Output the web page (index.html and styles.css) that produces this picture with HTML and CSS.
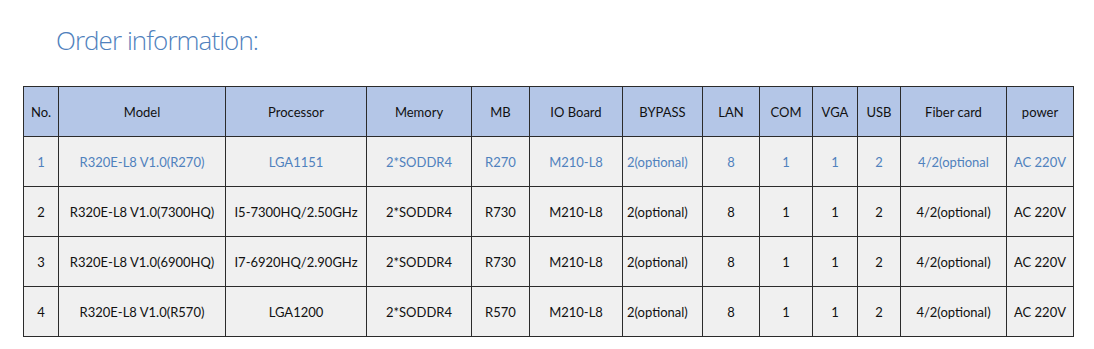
FILE: index.html
```html
<!DOCTYPE html>
<html>
<head>
<meta charset="utf-8">
<link rel="stylesheet" href="styles.css">
</head>
<body>
<div class="page">
  <h1 class="title">Order information:</h1>
  <table class="order">
    <colgroup>
      <col class="c-no"><col class="c-model"><col class="c-proc"><col class="c-mem"><col class="c-mb"><col class="c-io"><col class="c-bypass"><col class="c-lan"><col class="c-com"><col class="c-vga"><col class="c-usb"><col class="c-fiber"><col class="c-power">
    </colgroup>
    <thead>
      <tr>
        <th>No.</th><th>Model</th><th>Processor</th><th>Memory</th><th>MB</th><th>IO Board</th><th>BYPASS</th><th>LAN</th><th>COM</th><th>VGA</th><th>USB</th><th>Fiber card</th><th>power</th>
      </tr>
    </thead>
    <tbody>
      <tr class="hl">
        <td>1</td><td>R320E-L8 V1.0(R270)</td><td>LGA1151</td><td>2*SODDR4</td><td>R270</td><td>M210-L8</td><td class="left">2(optional)</td><td>8</td><td>1</td><td>1</td><td>2</td><td>4/2(optional</td><td>AC 220V</td>
      </tr>
      <tr>
        <td>2</td><td>R320E-L8 V1.0(7300HQ)</td><td>I5-7300HQ/2.50GHz</td><td>2*SODDR4</td><td>R730</td><td>M210-L8</td><td class="left">2(optional)</td><td>8</td><td>1</td><td>1</td><td>2</td><td>4/2(optional)</td><td>AC 220V</td>
      </tr>
      <tr>
        <td>3</td><td>R320E-L8 V1.0(6900HQ)</td><td>I7-6920HQ/2.90GHz</td><td>2*SODDR4</td><td>R730</td><td>M210-L8</td><td class="left">2(optional)</td><td>8</td><td>1</td><td>1</td><td>2</td><td>4/2(optional)</td><td>AC 220V</td>
      </tr>
      <tr>
        <td>4</td><td>R320E-L8 V1.0(R570)</td><td>LGA1200</td><td>2*SODDR4</td><td>R570</td><td>M210-L8</td><td class="left">2(optional)</td><td>8</td><td>1</td><td>1</td><td>2</td><td>4/2(optional)</td><td>AC 220V</td>
      </tr>
    </tbody>
  </table>
</div>
</body>
</html>
```
FILE: styles.css
```css
html, body {
  margin: 0;
  padding: 0;
  background: #ffffff;
}
.page {
  padding: 22px 0 0 23px;
}
.title {
  margin: 0 0 0 33px;
  font-family: "Open Sans", "Liberation Sans", sans-serif;
  font-weight: 300;
  font-size: 26px;
  line-height: 36px;
  color: #4f81bd;
  letter-spacing: -0.95px;
}
.order {
  margin-top: 28px;
  border-collapse: collapse;
  table-layout: fixed;
  width: 1051px;
  font-family: Lato, "Open Sans", sans-serif;
  font-size: 13px;
  color: #111;
}
.c-no { width: 35px; }
.c-model { width: 167px; }
.c-proc { width: 141px; }
.c-mem { width: 105px; }
.c-mb { width: 58px; }
.c-io { width: 93px; }
.c-bypass { width: 80px; }
.c-lan { width: 57px; }
.c-com { width: 53px; }
.c-vga { width: 45px; }
.c-usb { width: 43px; }
.c-fiber { width: 106px; }
.c-power { width: 67px; }
.order th, .order td {
  border: 1px solid #2b2b2b;
  height: 49px;
  padding: 0;
  text-align: center;
  vertical-align: middle;
  white-space: nowrap;
  overflow: hidden;
}
.order th {
  background: #b4c6e7;
  font-weight: 400;
}
.order td {
  background: #f0f0f0;
}
.order td.left {
  text-align: left;
  padding-left: 4px;
}
.order tr.hl td {
  color: #4f81bd;
}
```
